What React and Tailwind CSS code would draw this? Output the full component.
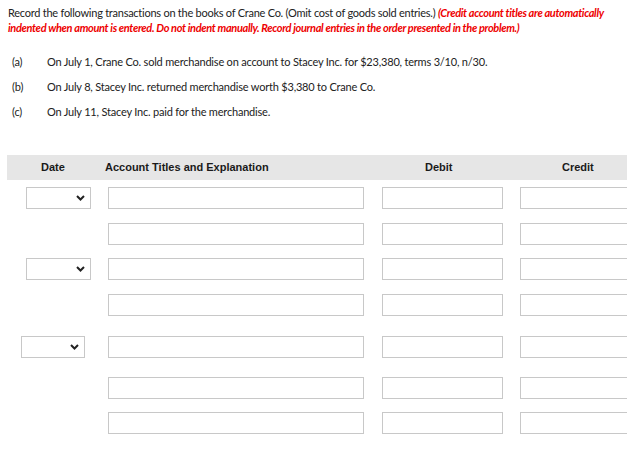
const rows = [
  { date: 'a', top: 'mt-[7px]' },
  { date: null, top: 'mt-[14px]' },
  { date: 'a', top: 'mt-[13px]' },
  { date: null, top: 'mt-[14px]' },
  { date: 'b', top: 'mt-[20px]' },
  { date: null, top: 'mt-[19px]' },
  { date: null, top: 'mt-[13px]' },
]

function DateSelect({ variant }) {
  return (
    <div
      className={`h-[22px] border border-[#c8c8c8] bg-white flex items-center justify-end pr-[5px] ${
        variant === 'b' ? 'w-[64px] ml-[21px]' : 'w-[65px] ml-[26px]'
      }`}
    >
      <svg width="9" height="6" viewBox="0 0 9 6">
        <path d="M1 1 L4.5 4.5 L8 1" fill="none" stroke="#222" strokeWidth="2" />
      </svg>
    </div>
  )
}

function Box({ className }) {
  return <div className={`h-[22px] shrink-0 border border-[#c8c8c8] bg-white ${className}`} />
}

export default function App() {
  return (
    <div
      className="w-[627px] h-[450px] overflow-hidden bg-white text-[#222]"
      style={{ fontFamily: 'Lato, sans-serif' }}
    >
      <div className="pl-[8px] pt-[5px] text-[11px] leading-[15px] tracking-[-0.25px]">
        Record the following transactions on the books of Crane Co. (Omit cost of goods sold entries.){' '}
        <span className="text-[#ee0000] italic font-bold tracking-[-0.35px]">
          (Credit account titles are automatically indented when amount is entered. Do not indent manually. Record
          journal entries in the order presented in the problem.)
        </span>
      </div>

      <div className="mt-[20px] text-[11px] tracking-[-0.2px] flex flex-col gap-[10px]">
        {[
          ['(a)', 'On July 1, Crane Co. sold merchandise on account to Stacey Inc. for $23,380, terms 3/10, n/30.'],
          ['(b)', 'On July 8, Stacey Inc. returned merchandise worth $3,380 to Crane Co.'],
          ['(c)', 'On July 11, Stacey Inc. paid for the merchandise.'],
        ].map(([l, t]) => (
          <div key={l} className="flex h-[15px] items-center">
            <span className="w-[47px] shrink-0 pl-[12px]">{l}</span>
            <span>{t}</span>
          </div>
        ))}
      </div>

      <div
        className="mt-[35px] ml-[7px] h-[25px] bg-[#e6e6e6] flex items-center text-[11px] font-bold text-[#1a1a1a]"
        style={{ fontFamily: '"Liberation Sans", sans-serif' }}
      >
        <span className="w-[98px] shrink-0 pl-[34px]">Date</span>
        <span className="w-[320px] shrink-0">Account Titles and Explanation</span>
        <span className="w-[137px] shrink-0">Debit</span>
        <span>Credit</span>
      </div>

      {rows.map((r, i) => (
        <div key={i} className={`flex items-center ${r.top}`}>
          <div className="w-[108px] shrink-0">{r.date && <DateSelect variant={r.date} />}</div>
          <Box className="w-[256px]" />
          <Box className="w-[121px] ml-[18px]" />
          <Box className="w-[120px] ml-[17px]" />
        </div>
      ))}
    </div>
  )
}
